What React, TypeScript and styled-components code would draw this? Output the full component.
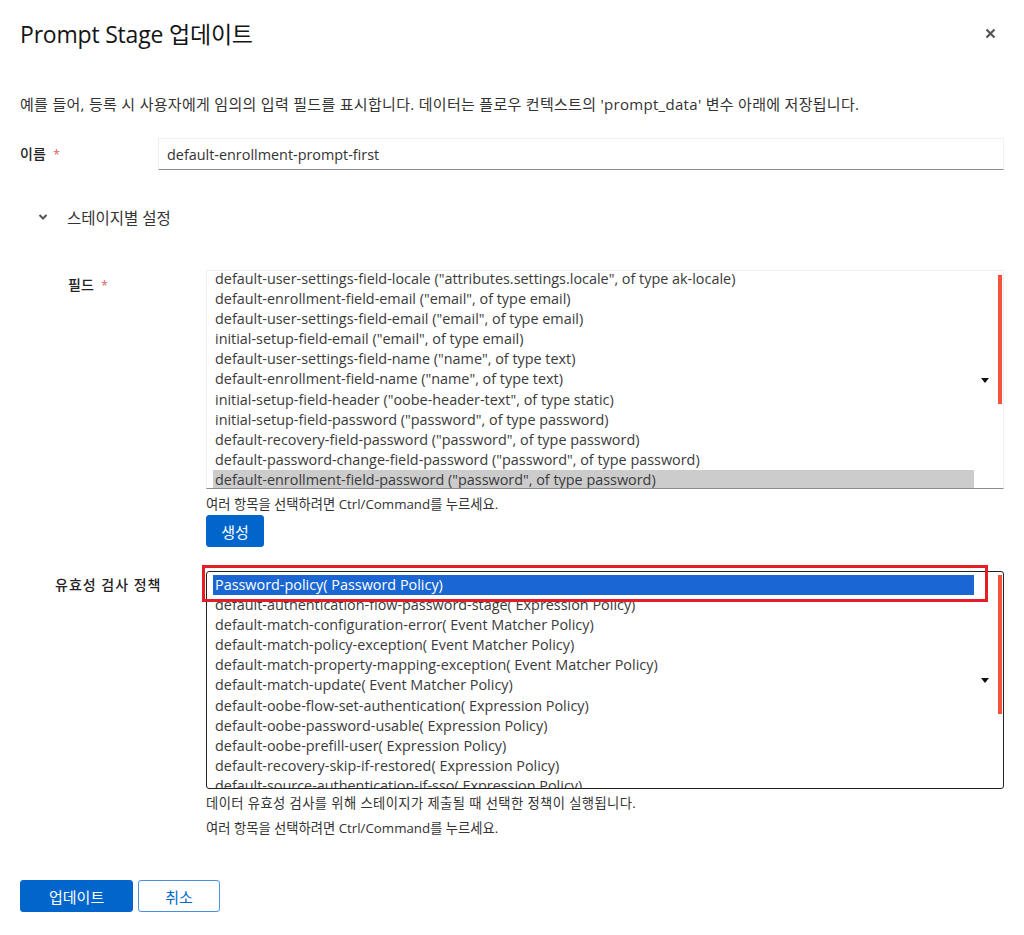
import React from "react"
import styled, { createGlobalStyle } from "styled-components"

const GlobalStyle = createGlobalStyle`
  body {
    margin: 0;
    background: #ffffff;
    font-family: "Open Sans", "Noto Sans CJK KR", sans-serif;
    color: #151515;
  }
`

const fieldOptions = [
  'default-user-settings-field-locale ("attributes.settings.locale", of type ak-locale)',
  'default-enrollment-field-email ("email", of type email)',
  'default-user-settings-field-email ("email", of type email)',
  'initial-setup-field-email ("email", of type email)',
  'default-user-settings-field-name ("name", of type text)',
  'default-enrollment-field-name ("name", of type text)',
  'initial-setup-field-header ("oobe-header-text", of type static)',
  'initial-setup-field-password ("password", of type password)',
  'default-recovery-field-password ("password", of type password)',
  'default-password-change-field-password ("password", of type password)',
  'default-enrollment-field-password ("password", of type password)',
]

const policyOptions = [
  "Password-policy( Password Policy)",
  "default-authentication-flow-password-stage( Expression Policy)",
  "default-match-configuration-error( Event Matcher Policy)",
  "default-match-policy-exception( Event Matcher Policy)",
  "default-match-property-mapping-exception( Event Matcher Policy)",
  "default-match-update( Event Matcher Policy)",
  "default-oobe-flow-set-authentication( Expression Policy)",
  "default-oobe-password-usable( Expression Policy)",
  "default-oobe-prefill-user( Expression Policy)",
  "default-recovery-skip-if-restored( Expression Policy)",
  "default-source-authentication-if-sso( Expression Policy)",
]

const Modal = styled.div`
  padding: 17px 20px 0 20px;
  width: 984px;
`

const Header = styled.header`
  display: flex;
  align-items: center;
  justify-content: space-between;
  height: 32px;
`

const Title = styled.h1`
  margin: 0;
  font-size: 23px;
  font-weight: 400;
  letter-spacing: -0.2px;
`

const CloseButton = styled.button`
  border: none;
  background: none;
  padding: 0;
  margin-right: 6px;
  width: 16px;
  height: 16px;
  display: flex;
  align-items: center;
  justify-content: center;
  color: #555;
`

const Description = styled.p`
  margin: 45px 0 0 0;
  font-size: 15px;
  line-height: 20px;
  letter-spacing: 0.3px;
  color: #333;
`

const Row = styled.div<{ $indent?: number; $labelWidth?: number }>`
  display: grid;
  grid-template-columns: ${(p) => p.$labelWidth ?? 138}px 1fr;
  padding-left: ${(p) => p.$indent ?? 0}px;
`

const Label = styled.label<{ $shift?: number; $top?: number; $spacing?: number }>`
  font-size: 14px;
  font-weight: 500;
  color: #222;
  padding-top: ${(p) => p.$top ?? 7}px;
  margin-left: ${(p) => p.$shift ?? 0}px;
  line-height: 18px;
  letter-spacing: ${(p) => p.$spacing ?? 0.2}px;
`

const Required = styled.span`
  color: #e06060;
  margin-left: 7px;
  font-size: 12px;
`

const TextInput = styled.input`
  height: 32px;
  box-sizing: border-box;
  border: 1px solid #f0f0f0;
  border-bottom-color: #8a8d90;
  padding: 0 8px;
  font: inherit;
  font-size: 14.4px;
  color: #333;
  outline: none;
`

const Toggle = styled.div`
  display: flex;
  align-items: center;
  gap: 19px;
  padding-left: 18px;
  margin-top: 36px;
  font-size: 15.5px;
  color: #333;
  height: 22px;
`

const ListWrap = styled.div`
  position: relative;
`

const ListBox = styled.div<{ $dark?: boolean }>`
  position: relative;
  height: ${(p) => (p.$dark ? 218 : 219)}px;
  box-sizing: border-box;
  overflow: hidden;
  border: 1px solid ${(p) => (p.$dark ? "#222" : "#f0f0f0")};
  border-bottom-color: ${(p) => (p.$dark ? "#222" : "#8a8d90")};
  border-radius: ${(p) => (p.$dark ? "3px" : "0")};
`

const Options = styled.div<{ $offset: number }>`
  padding: 0 29px 0 6px;
  margin-top: ${(p) => p.$offset}px;
`

const Option = styled.div<{ $state?: "selected" | "active" }>`
  height: 20.1px;
  line-height: 20px;
  padding-left: 2px;
  font-size: 14.4px;
  white-space: nowrap;
  color: ${(p) => (p.$state === "active" ? "#fff" : "#3a3a3a")};
  background: ${(p) =>
    p.$state === "active" ? "#1a66d2" : p.$state === "selected" ? "#cccccc" : "transparent"};
`

const ScrollThumb = styled.div<{ $top: number; $height: number }>`
  position: absolute;
  right: 1px;
  top: ${(p) => p.$top}px;
  width: 4px;
  height: ${(p) => p.$height}px;
  background: #f4533a;
`

const Caret = styled.div<{ $top: number }>`
  position: absolute;
  right: 14px;
  top: ${(p) => p.$top}px;
  width: 0;
  height: 0;
  border-left: 4px solid transparent;
  border-right: 4px solid transparent;
  border-top: 5px solid #111;
`

const Highlight = styled.div`
  position: absolute;
  left: -4px;
  top: -6px;
  width: 780px;
  height: 31px;
  border: 3px solid #e41e26;
  pointer-events: none;
`

const Helper = styled.div<{ $top?: number; $spacing?: number }>`
  font-size: 13.3px;
  color: #333;
  line-height: 18px;
  letter-spacing: ${(p) => p.$spacing ?? 0}px;
  margin-top: ${(p) => p.$top ?? 0}px;
`

const Button = styled.button<{ $variant?: "primary" | "secondary" }>`
  height: 32px;
  box-sizing: border-box;
  padding: 0 ${(p) => (p.$variant === "secondary" ? 26 : 28)}px;
  font: inherit;
  font-size: 15px;
  border-radius: 3px;
  border: 1px solid ${(p) => (p.$variant === "secondary" ? "#4a90e2" : "#0066cc")};
  background: ${(p) => (p.$variant === "secondary" ? "#fff" : "#0066cc")};
  color: ${(p) => (p.$variant === "secondary" ? "#0066cc" : "#fff")};
`

const CreateButton = styled(Button)`
  width: 58px;
  padding: 0;
  margin-top: 2px;
`

const Footer = styled.div`
  display: flex;
  gap: 5px;
  margin-top: 43px;
`

const Spacer = styled.div<{ $h: number }>`
  height: ${(p) => p.$h}px;
`

const Chevron = () => (
  <svg width="10" height="8" viewBox="0 0 10 8">
    <path d="M1.5 2 L5 5.5 L8.5 2" fill="none" stroke="#555" strokeWidth="2" />
  </svg>
)

const CloseIcon = () => (
  <svg width="11" height="11" viewBox="0 0 11 11">
    <path d="M1.5 1.5 L9.5 9.5 M9.5 1.5 L1.5 9.5" stroke="#555" strokeWidth="2.2" />
  </svg>
)

export default function App() {
  return (
    <>
      <GlobalStyle />
      <Modal>
        <Header>
          <Title>Prompt Stage 업데이트</Title>
          <CloseButton aria-label="close">
            <CloseIcon />
          </CloseButton>
        </Header>

        <Description>
          예를 들어, 등록 시 사용자에게 임의의 입력 필드를 표시합니다. 데이터는 플로우 컨텍스트의
          'prompt_data' 변수 아래에 저장됩니다.
        </Description>

        <Spacer $h={24} />
        <Row>
          <Label>
            이름<Required>*</Required>
          </Label>
          <TextInput defaultValue="default-enrollment-prompt-first" />
        </Row>

        <Toggle>
          <Chevron />
          <span>스테이지별 설정</span>
        </Toggle>

        <Spacer $h={42} />
        <Row $indent={48}>
          <Label $top={6}>
            필드<Required>*</Required>
          </Label>
          <div>
            <ListWrap>
              <ListBox>
                <Options $offset={-2}>
                  {fieldOptions.map((o, i) => (
                    <Option key={i} $state={i === fieldOptions.length - 1 ? "selected" : undefined}>
                      {o}
                    </Option>
                  ))}
                </Options>
                <ScrollThumb $top={4} $height={129} />
                <Caret $top={107} />
              </ListBox>
            </ListWrap>
            <Helper $top={6}>여러 항목을 선택하려면 Ctrl/Command를 누르세요.</Helper>
            <CreateButton>생성</CreateButton>
          </div>
        </Row>

        <Spacer $h={24} />
        <Row $indent={48}>
          <Label $top={5} $shift={-13} $spacing={1}>
            유효성 검사 정책
          </Label>
          <div>
            <ListWrap>
              <ListBox $dark>
                <Options $offset={3}>
                  {policyOptions.map((o, i) => (
                    <Option key={i} $state={i === 0 ? "active" : undefined}>
                      {o}
                    </Option>
                  ))}
                </Options>
                <ScrollThumb $top={3} $height={139} />
                <Caret $top={106} />
              </ListBox>
              <Highlight />
            </ListWrap>
            <Helper $top={5} $spacing={0.4}>
              데이터 유효성 검사를 위해 스테이지가 제출될 때 선택한 정책이 실행됩니다.
            </Helper>
            <Helper $top={7}>여러 항목을 선택하려면 Ctrl/Command를 누르세요.</Helper>
          </div>
        </Row>

        <Footer>
          <Button $variant="primary">업데이트</Button>
          <Button $variant="secondary">취소</Button>
        </Footer>
      </Modal>
    </>
  )
}
